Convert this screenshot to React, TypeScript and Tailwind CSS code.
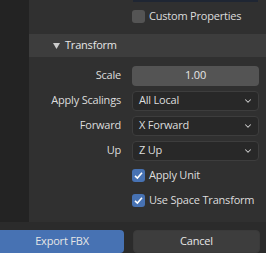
import { ChevronDown } from 'lucide-react'

function Check({ on, label }: { on?: boolean; label: string }) {
  return (
    <div className="flex h-[25px] items-center pl-[103px]">
      <span
        className={
          'flex h-[13px] w-[13px] shrink-0 items-center justify-center rounded-[3px] ' +
          (on ? 'bg-[#4772b3]' : 'bg-[#545454]')
        }
      >
        {on && (
          <svg width="11" height="11" viewBox="0 0 11 11">
            <path d="M2 5.8 L4.4 8 L9 2.8" fill="none" stroke="#ffffff" strokeWidth="1.6" />
          </svg>
        )}
      </span>
      <span className="ml-[4px] whitespace-nowrap text-[#dddddd]">{label}</span>
    </div>
  )
}

function Select({ label, value }: { label: string; value: string }) {
  return (
    <div className="flex h-[25px] items-center">
      <span className="w-[92px] whitespace-nowrap text-right text-[#dddddd]">{label}</span>
      <div className="ml-[11px] flex h-[20px] w-[127px] items-center justify-between rounded-[4px] border border-[#3d3d3d] bg-[#282828] pl-[6px] pr-[5px] text-[#dddddd]">
        <span>{value}</span>
        <ChevronDown size={10} strokeWidth={2.5} className="text-[#cfcfcf]" />
      </div>
    </div>
  )
}

export default function App() {
  return (
    <div
      className="flex h-[253px] w-[266px] flex-col overflow-hidden bg-[#2b2b2b] text-[11px] tracking-[-0.2px]"
      style={{ fontFamily: '"Open Sans", sans-serif' }}
    >
      <div className="flex h-[222px]">
        <div className="w-[29px] bg-[#232323]" />
        <div className="flex-1 overflow-hidden bg-[#303030]">
          <div className="ml-[104px] h-[2px] w-[125px] bg-[#1f2633]" />
          <div className="mt-[2px]">
            <Check label="Custom Properties" />
          </div>
          <div className="mt-[5px] flex h-[23px] items-center bg-[#3d3d3d] text-[#e6e6e6]">
            <svg className="ml-[24px]" width="7" height="6" viewBox="0 0 7 6">
              <path d="M0 0 H7 L3.5 6 Z" fill="#cccccc" />
            </svg>
            <span className="ml-[5px]">Transform</span>
          </div>
          <div className="mt-[6px] flex h-[25px] items-center">
            <span className="w-[92px] text-right text-[#dddddd]">Scale</span>
            <div className="ml-[11px] flex h-[20px] w-[127px] items-center justify-center rounded-[4px] bg-[#545454] text-[#e6e6e6]">
              1.00
            </div>
          </div>
          <Select label="Apply Scalings" value="All Local" />
          <Select label="Forward" value="X Forward" />
          <Select label="Up" value="Z Up" />
          <Check on label="Apply Unit" />
          <Check on label="Use Space Transform" />
          <div className="mt-[9px] flex items-start pl-[107px]">
            <span className="h-[2px] w-[8px] rounded-t-[2px] bg-[#5a5a5a]" />
            <span className="ml-[104px] h-[2px] w-[3px] bg-[#cccccc]" />
          </div>
        </div>
      </div>
      <div className="mt-[8px] flex h-[23px] items-stretch text-[#e6e6e6]">
        <button className="w-[124px] rounded-r-[4px] bg-[#4772b3] text-center">Export FBX</button>
        <button className="ml-[9px] w-[127px] rounded-[4px] border border-[#3a3a3a] bg-[#3d3d3d] text-center">
          Cancel
        </button>
      </div>
    </div>
  )
}
